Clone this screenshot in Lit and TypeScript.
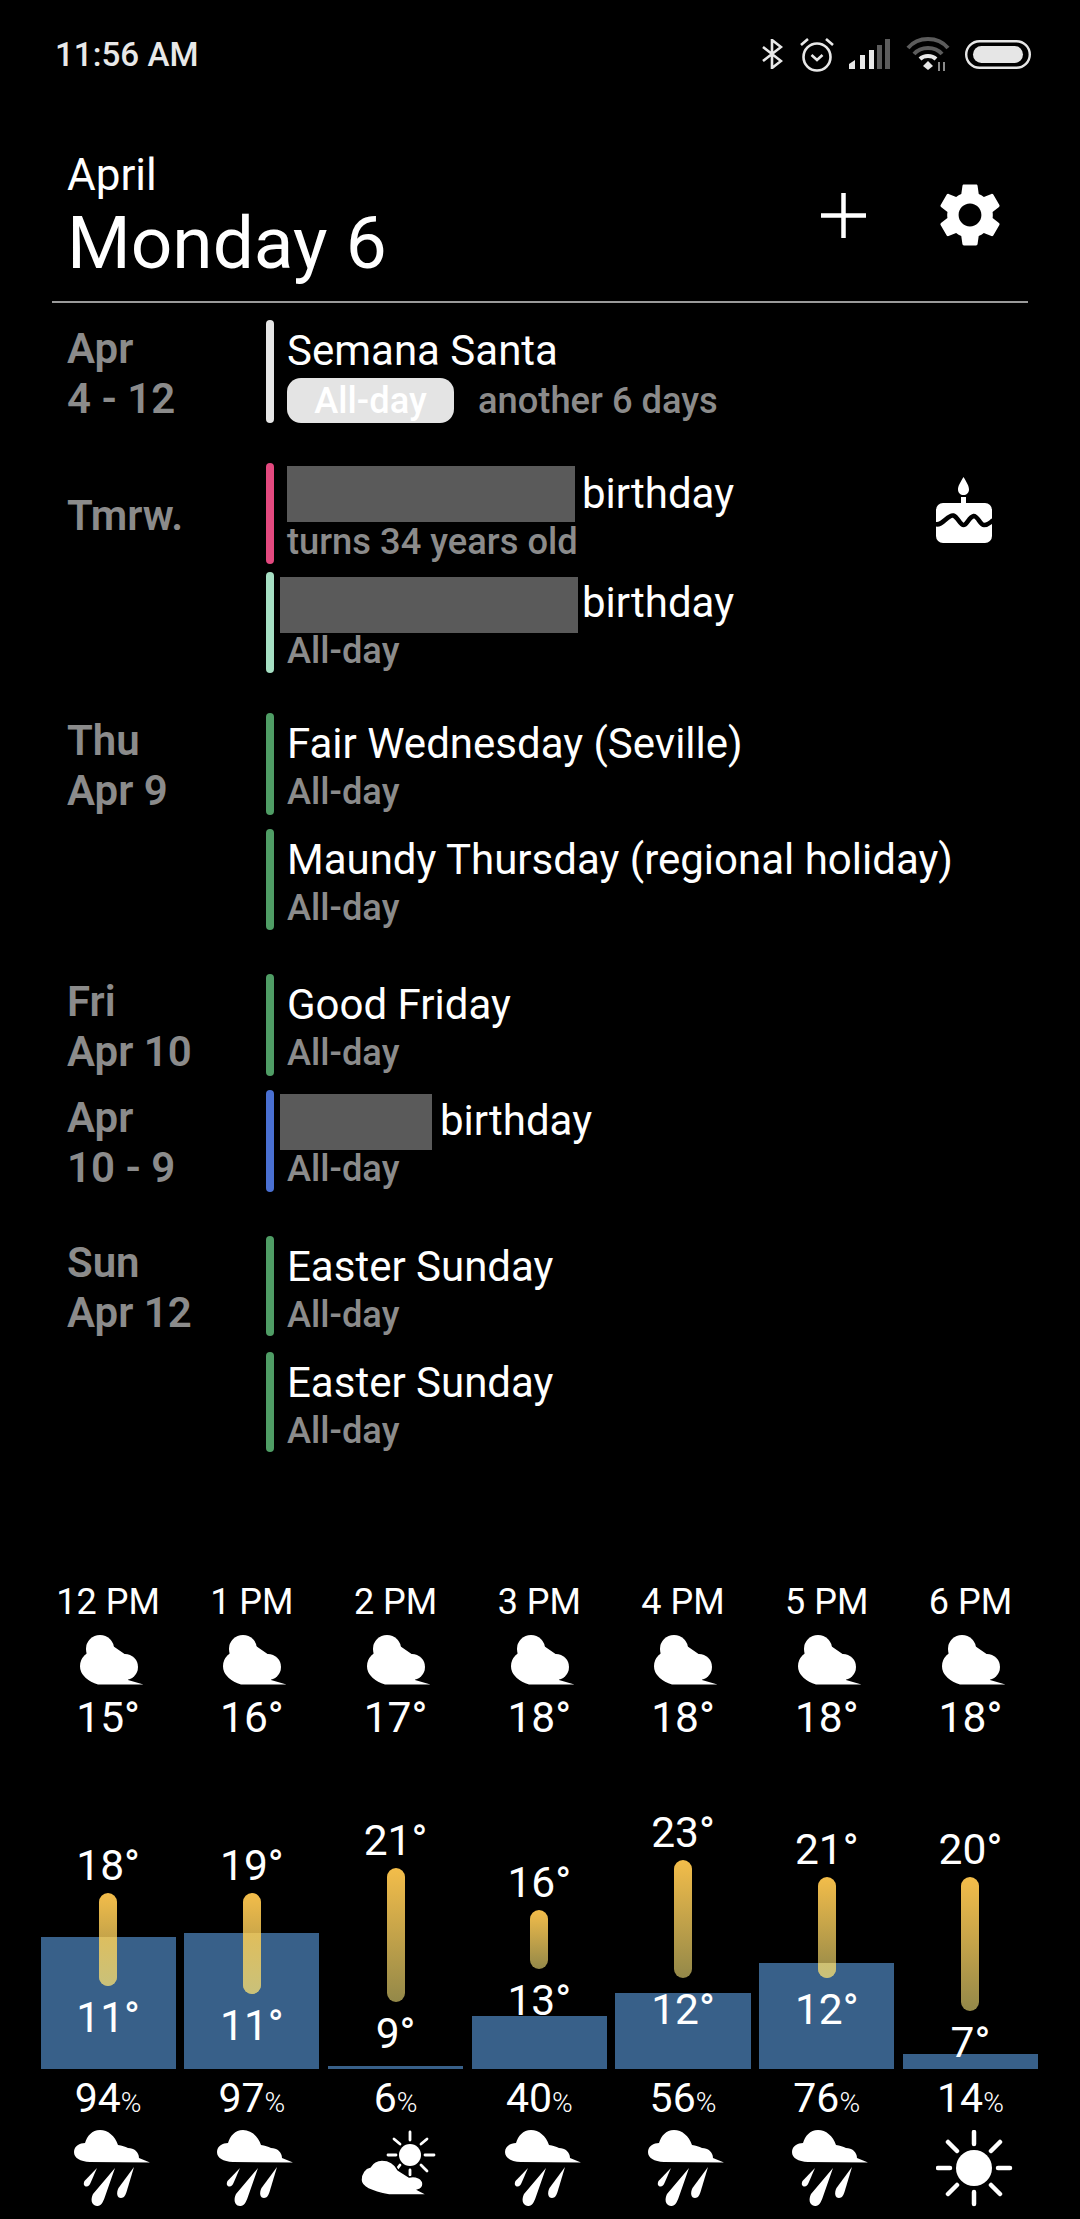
import { LitElement, html, css, svg } from "lit";
import { customElement } from "lit/decorators.js";

type Row = {
  date?: string[];
  color: string;
  gap: number;
  height: number;
  title: string;
  sub?: string;
  redact?: number;
  pull?: number;
  after?: number;
  drop?: number;
  pill?: boolean;
  cake?: boolean;
};

const WHITE_BAR = "#e6e6e6";
const GREEN = "#4f9d65";

const rows: Row[] = [
  { date: ["Apr", "4 - 12"], color: WHITE_BAR, gap: 17, height: 103, title: "Semana Santa", sub: "another 6 days", pill: true },
  { date: ["Tmrw."], color: "#e3497f", gap: 40, height: 101, title: "birthday", sub: "turns 34 years old", redact: 288, after: 7, cake: true },
  { color: "#a6dfc3", gap: 8, height: 101, title: "birthday", sub: "All-day", redact: 298, pull: -7, after: 4, drop: 2 },
  { date: ["Thu", "Apr 9"], color: GREEN, gap: 40, height: 102, title: "Fair Wednesday (Seville)", sub: "All-day" },
  { color: GREEN, gap: 14, height: 101, title: "Maundy Thursday (regional holiday)", sub: "All-day" },
  { date: ["Fri", "Apr 10"], color: GREEN, gap: 44, height: 102, title: "Good Friday", sub: "All-day" },
  { date: ["Apr", "10 - 9"], color: "#4a70d2", gap: 14, height: 102, title: "birthday", sub: "All-day", redact: 152, pull: -7, after: 8, drop: 1 },
  { date: ["Sun", "Apr 12"], color: GREEN, gap: 44, height: 100, title: "Easter Sunday", sub: "All-day" },
  { color: GREEN, gap: 16, height: 100, title: "Easter Sunday", sub: "All-day" },
];

const hours = [
  ["12 PM", "15°"],
  ["1 PM", "16°"],
  ["2 PM", "17°"],
  ["3 PM", "18°"],
  ["4 PM", "18°"],
  ["5 PM", "18°"],
  ["6 PM", "18°"],
];

// top and bottom are page y of the temperature bar, rain is the blue bar height
const days = [
  { hi: "18°", lo: "11°", top: 1893, bottom: 1986, rain: 132, pop: "94", icon: "rain" },
  { hi: "19°", lo: "11°", top: 1893, bottom: 1994, rain: 136, pop: "97", icon: "rain" },
  { hi: "21°", lo: "9°", top: 1868, bottom: 2002, rain: 3, pop: "6", icon: "partly" },
  { hi: "16°", lo: "13°", top: 1910, bottom: 1969, rain: 53, pop: "40", icon: "rain" },
  { hi: "23°", lo: "12°", top: 1860, bottom: 1978, rain: 76, pop: "56", icon: "rain" },
  { hi: "21°", lo: "12°", top: 1877, bottom: 1978, rain: 106, pop: "76", icon: "rain" },
  { hi: "20°", lo: "7°", top: 1877, bottom: 2011, rain: 15, pop: "14", icon: "sun" },
];

const CHART_TOP = 1790;
const CHART_BOTTOM = 2069;

const cloudIcon = html`<svg class="cloud" width="64" height="50" viewBox="0 0 64 50" fill="#fff">
  <circle cx="20" cy="14" r="14" />
  <circle cx="15" cy="31" r="15" />
  <circle cx="45" cy="32" r="13" />
  <path d="M5 42C9 46 13 48 18 49.500H63.500L48 45L46 20L33 11L8 18Z" />
</svg>`;

const rainIcon = svg`
  <path d="M16 32C6 31.500 0 28 0 22C0 16 6 13 11 13C13 6 18 0 26 0C34 0 41 6 44 15C48 15.500 51 16.500 54 18C60 18 65 22 65 28L76 32.500Z" />
  <path d="M23 38L10.500 51C9 54 10 56.500 12.500 56.500C14.500 56.500 15.500 55 16.500 53Z" />
  <path d="M41 38L19 64C16.500 69 17 75.500 23 76C27 76.500 29 72 30.500 68Z" />
  <path d="M60 37L44.500 58C42 63 43 68 47 68C50 68 51.500 65 52.500 62Z" />`;

const partlyIcon = svg`
  <g stroke="#fff" stroke-width="2.8" stroke-linecap="round">
    <path d="M49 2V10M27 25H35M64 25H73M33 9L39 14M66 9L60 14M60 35L66 41M39 35L36 39M49 40V45" />
  </g>
  <circle cx="49" cy="25" r="11" />
  <path stroke="#000" stroke-width="1.5" d="M28 65C12 62 0 58 0 50C0 43 4 38 9 37C12 32 16 30 21 30C29 30 34 34 37 40L48 47C55 45 62 49 62 54C62 57 60 59 57 60L67 65Z" />`;

const sunIcon = svg`
  <g stroke="#fff" stroke-width="4.5" stroke-linecap="round">
    <path d="M38 2V14M38 62V74M2 38H14M62 38H74M12 12L21 21M64 12L55 21M12 64L21 55M64 64L55 55" />
  </g>
  <circle cx="38" cy="38" r="18" />`;

const bottomIcons: Record<string, unknown> = { rain: rainIcon, partly: partlyIcon, sun: sunIcon };

@customElement("app-root")
export class AppRoot extends LitElement {
  static styles = css`
    :host {
      display: block;
      min-height: 2219px;
      background: #000;
      color: #fff;
      font-family: Roboto, "Liberation Sans", sans-serif;
    }

    .status {
      height: 108px;
      display: flex;
      align-items: center;
      justify-content: space-between;
      padding: 0 49px 0 55px;
      box-sizing: border-box;
    }

    .time {
      font-size: 33.2px;
      font-weight: 500;
      color: #e8e8e8;
    }

    .status-icons {
      display: flex;
      align-items: center;
    }

    .header {
      margin: 0 52px;
      height: 195px;
      box-sizing: border-box;
      padding: 41px 20px 0 15px;
      border-bottom: 2px solid #9a9a9a;
      display: flex;
      justify-content: space-between;
    }

    .month {
      font-size: 44px;
      line-height: 52px;
    }

    .day {
      font-size: 73px;
      line-height: 84px;
    }

    .actions {
      display: flex;
      align-items: center;
      gap: 66px;
      height: 132px;
    }

    .events {
      padding-left: 67px;
    }

    .row {
      display: grid;
      grid-template-columns: 199px 8px 1fr;
      grid-template-rows: minmax(0, 1fr);
    }

    .date {
      align-self: center;
      padding-top: 4px;
      font-size: 42px;
      line-height: 50px;
      font-weight: 600;
      color: #8b8b8b;
    }

    .bar {
      border-radius: 4px;
    }

    .body {
      padding: 6px 0 0 13px;
      display: flex;
      justify-content: space-between;
    }

    .title {
      font-size: 42px;
      line-height: 50px;
      display: flex;
      align-items: center;
    }

    .redact {
      height: 56px;
      background: #5a5a5a;
    }

    .sub {
      font-size: 36.3px;
      line-height: 46px;
      font-weight: 500;
      color: #8b8b8b;
      display: flex;
    }

    .pill {
      width: 167px;
      height: 45px;
      margin: 2px 24px 0 0;
      border-radius: 14px;
      background: #e4e4e4;
      color: #fff;
      text-align: center;
      line-height: 45px;
    }

    .pill + span {
      line-height: 45px;
      margin-top: 2px;
    }

    .cake {
      align-self: center;
      margin: 0 88px 14px 0;
    }

    .grid {
      width: 997.4px;
      margin-left: 40.6px;
      display: grid;
      grid-template-columns: repeat(7, 1fr);
      column-gap: 8.67px;
      text-align: center;
    }

    .hours {
      margin-top: 128px;
    }

    .hour {
      font-size: 36px;
      line-height: 44px;
    }

    .cloud {
      display: block;
      margin: 11px 0 8px 39px;
    }

    .temp {
      font-size: 42.5px;
      line-height: 50px;
    }

    .chart {
      margin-top: 47px;
    }

    .column {
      position: relative;
      height: 279px;
      box-sizing: border-box;
    }

    .rain {
      position: absolute;
      left: 0;
      right: 0;
      bottom: 0;
      background: #386089;
    }

    .stack {
      position: relative;
    }

    .thermo {
      width: 18px;
      margin: 2px auto 7px;
      border-radius: 9px;
      background: linear-gradient(#f3bd4a, rgba(238, 220, 118, 0.62));
    }

    /* the part of a temperature bar that lies over the blue bar is lighter */
    .overlap {
      position: absolute;
      left: 0;
      right: 0;
      bottom: 0;
      overflow: hidden;
    }

    .overlap div {
      position: absolute;
      left: 50%;
      width: 18px;
      margin-left: -9px;
      border-radius: 9px;
      background: linear-gradient(#efbc48, #c9c17a);
    }

    .pop {
      margin-top: 5px;
      font-size: 41px;
      line-height: 48px;
    }

    .pop small {
      font-size: 28px;
      font-weight: 300;
      line-height: 1;
    }

    .weather {
      display: block;
      margin: 8px 0 0 33px;
    }
  `;

  renderStatusIcons() {
    return html`<div class="status-icons">
      <svg width="21" height="30" viewBox="0 0 21 30" fill="none" stroke="#e8e8e8" stroke-width="2.6">
        <path d="M1 8L19 22L10 29V1L19 8L1 22" />
      </svg>
      <svg style="margin-left:16px" width="36" height="36" viewBox="0 0 36 36" fill="none" stroke="#e8e8e8" stroke-width="2.6">
        <circle cx="18" cy="21" r="13.5" />
        <path d="M12.5 19L18 24L23.5 19M2 9L9 3M34 9L27 3" />
      </svg>
      <svg style="margin-left:14px" width="41" height="30" viewBox="0 0 41 30" fill="#e8e8e8">
        <path d="M0 30V25L6 21V30Z" />
        <rect x="11" y="16" width="5" height="14" />
        <rect x="20" y="11" width="5" height="19" />
        <rect x="28" y="6" width="5" height="24" fill="#5c5c5c" />
        <rect x="36" y="0" width="5" height="30" fill="#5c5c5c" />
      </svg>
      <svg style="margin-left:16px" width="44" height="34" viewBox="0 0 44 34" fill="none" stroke-width="4">
        <path d="M2 11C12 -1 32 -1 42 11" stroke="#5c5c5c" />
        <path d="M8 17C15 9 29 9 36 17" stroke="#5c5c5c" />
        <path d="M14 22C18 18 26 18 30 22" stroke="#e8e8e8" />
        <path d="M22 24L27 29L22 33L17 29Z" fill="#e8e8e8" stroke="none" />
        <path d="M33 25V34M38 25V34" stroke="#8a8a8a" stroke-width="2" />
      </svg>
      <svg style="margin-left:15px" width="66" height="29" viewBox="0 0 66 29" fill="#e6e6e6">
        <rect x="1.2" y="1.2" width="63.6" height="26.6" rx="13.3" fill="none" stroke="#e6e6e6" stroke-width="2.4" />
        <rect x="8" y="6" width="50" height="17" rx="8.5" />
      </svg>
    </div>`;
  }

  renderRow(row: Row) {
    const drop = row.drop ?? 0;
    return html`<div class="row" style="margin-top:${row.gap}px;height:${row.height}px">
      <div class="date">${row.date?.map((line) => html`<div>${line}</div>`)}</div>
      <div class="bar" style="background:${row.color}"></div>
      <div class="body">
        <div>
          <div class="title">
            ${row.redact
              ? html`<span
                  class="redact"
                  style="width:${row.redact}px;margin:${drop - 3}px ${row.after}px ${-3 - drop}px ${row.pull ?? 0}px"
                ></span>`
              : ""}
            <span>${row.title}</span>
          </div>
          <div class="sub">
            ${row.pill ? html`<span class="pill">All-day</span>` : ""}
            <span>${row.sub}</span>
          </div>
        </div>
        ${row.cake
          ? html`<svg class="cake" width="56" height="66" viewBox="0 0 56 66" fill="#fff">
              <path d="M27.500 0C24 6 22 9 22 12.500C22 16 24.500 18 27.500 18C30.500 18 33 16 33 12.500C33 9 31 6 27.500 0Z" />
              <rect x="25" y="20" width="5" height="8" />
              <rect x="0" y="26" width="56" height="40" rx="7" />
              <path
                d="M-1 47C6 50 12 37 17.300 38.500C22 40 24 48 27.500 48C31 48 33 40 37.700 39C42 39 44 48 48 48C51 48 54 46 57 43"
                fill="none"
                stroke="#000"
                stroke-width="4.500"
              />
            </svg>`
          : ""}
      </div>
    </div>`;
  }

  render() {
    return html`
      <div class="status">
        <div class="time">11:56 AM</div>
        ${this.renderStatusIcons()}
      </div>

      <div class="header">
        <div>
          <div class="month">April</div>
          <div class="day">Monday 6</div>
        </div>
        <div class="actions">
          <svg width="45" height="45" viewBox="0 0 45 45" stroke="#fff" stroke-width="4.500">
            <path d="M22.500 0V45M0 22.500H45" />
          </svg>
          <svg width="76" height="76" viewBox="0 0 24 24" fill="#fff">
            <path
              d="M19.14 12.94c.04-.3.06-.61.06-.94 0-.32-.02-.64-.07-.94l2.03-1.58c.18-.14.23-.41.12-.61l-1.920-3.320c-.12-.22-.37-.29-.59-.22l-2.390.96c-.5-.38-1.030-.7-1.620-.94l-.36-2.540c-.04-.24-.24-.41-.48-.41h-3.840c-.24 0-.43.17-.47.41l-.36 2.540c-.59.24-1.130.57-1.620.94l-2.390-.96c-.22-.08-.47 0-.59.22L2.740 8.870c-.12.21-.08.47.12.61l2.030 1.580c-.05.3-.09.63-.09.94s.02.64.07.94l-2.030 1.580c-.18.14-.23.41-.12.61l1.920 3.320c.12.22.37.29.59.22l2.390-.96c.5.38 1.030.7 1.620.94l.36 2.540c.05.24.24.41.48.41h3.840c.24 0 .44-.17.47-.41l.36-2.540c.59-.24 1.130-.56 1.620-.94l2.390.96c.22.08.47 0 .59-.22l1.920-3.320c.12-.22.07-.47-.12-.61l-2.010-1.580zM12 15.600c-1.980 0-3.600-1.620-3.600-3.600s1.620-3.600 3.600-3.600 3.600 1.620 3.600 3.600-1.620 3.600-3.600 3.600z"
            />
          </svg>
        </div>
      </div>

      <div class="events">${rows.map((row) => this.renderRow(row))}</div>

      <div class="grid hours">
        ${hours.map(
          ([hour, temp]) => html`<div>
            <div class="hour">${hour}</div>
            ${cloudIcon}
            <div class="temp">${temp}</div>
          </div>`
        )}
      </div>

      <div class="grid chart">
        ${days.map(
          (d) => html`<div>
            <div class="column">
              <div class="rain" style="height:${d.rain}px"></div>
              <div class="stack" style="padding-top:${d.top - CHART_TOP - 52}px">
                <div class="temp">${d.hi}</div>
                <div class="thermo" style="height:${d.bottom - d.top}px"></div>
                <div class="temp">${d.lo}</div>
              </div>
              ${d.bottom > CHART_BOTTOM - d.rain
                ? html`<div class="overlap" style="height:${d.rain}px">
                    <div style="height:${d.bottom - d.top}px;bottom:${CHART_BOTTOM - d.bottom}px"></div>
                  </div>`
                : ""}
            </div>
            <div class="pop">${d.pop}<small>%</small></div>
            <svg class="weather" width="80" height="80" viewBox="0 0 80 80" fill="#fff">${bottomIcons[d.icon]}</svg>
          </div>`
        )}
      </div>
    `;
  }
}
